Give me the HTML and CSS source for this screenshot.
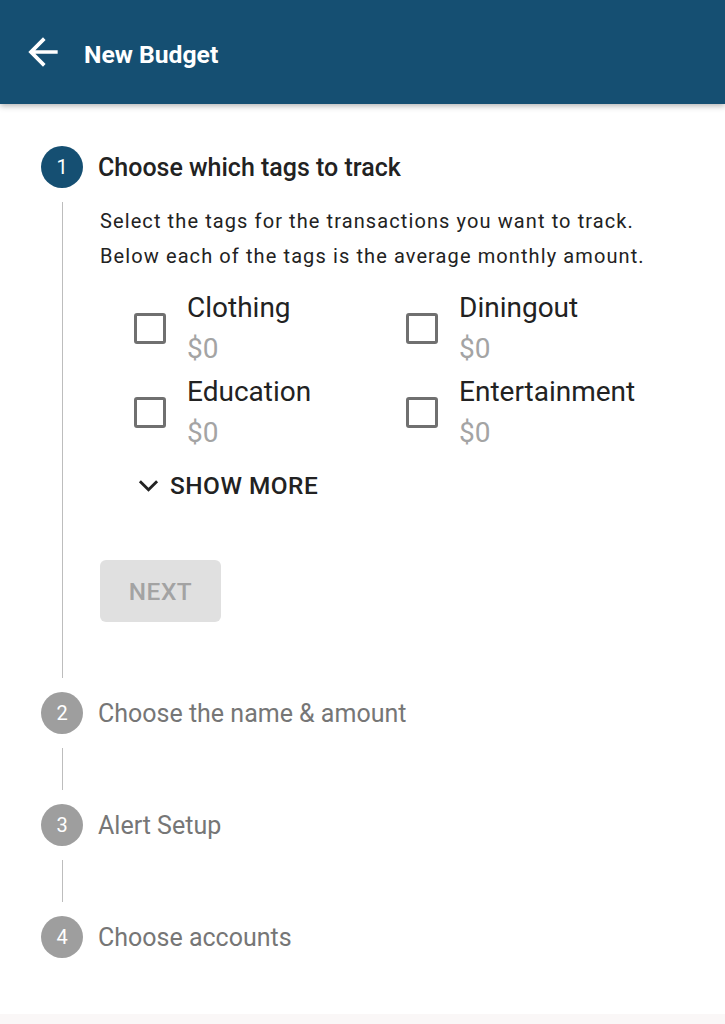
FILE: index.html
```html
<html>
<head>
	<title>New Budget</title>
	<meta charset="UTF-8">
	<meta name="viewport" content="width=device-width, initial-scale=1.0"/>
	<link rel="stylesheet" href="styles.css">
</head>
<body>
	<div class="topbar">
		<svg class="back" viewBox="0 0 24 24"><path d="M20 11H7.83l5.59-5.59L12 4l-8 8 8 8 1.41-1.41L7.83 13H20v-2z"/></svg>
		<h1>New Budget</h1>
	</div>

	<div class="stepper">
		<div class="step-head">
			<span class="num active">1</span>
			<span class="step-title active">Choose which tags to track</span>
		</div>
		<div class="step-body">
			<p class="desc">Select the tags for the transactions you want to track.<br/>
			Below each of the tags is the average monthly amount.</p>
			<div class="tags">
				<label class="tag"><span class="box"></span><span class="tag-text"><span class="tag-name">Clothing</span><span class="tag-amt">$0</span></span></label>
				<label class="tag"><span class="box"></span><span class="tag-text"><span class="tag-name">Diningout</span><span class="tag-amt">$0</span></span></label>
				<label class="tag"><span class="box"></span><span class="tag-text"><span class="tag-name">Education</span><span class="tag-amt">$0</span></span></label>
				<label class="tag"><span class="box"></span><span class="tag-text"><span class="tag-name">Entertainment</span><span class="tag-amt">$0</span></span></label>
			</div>
			<div class="more">
				<svg class="chev" viewBox="0 0 22 13"><polyline points="2,2 11,11 20,2"/></svg>
				<span>SHOW MORE</span>
			</div>
			<button class="next" disabled>NEXT</button>
		</div>

		<div class="step-head">
			<span class="num">2</span>
			<span class="step-title">Choose the name &amp; amount</span>
		</div>
		<div class="connector"></div>
		<div class="step-head">
			<span class="num">3</span>
			<span class="step-title">Alert Setup</span>
		</div>
		<div class="connector"></div>
		<div class="step-head">
			<span class="num">4</span>
			<span class="step-title">Choose accounts</span>
		</div>
	</div>
	<div class="bottom"></div>
</body>
</html>
```

FILE: styles.css
```css
*{
	margin: 0;
	padding: 0;
	box-sizing: border-box;
}
body{
	font-family: Roboto, "Liberation Sans", sans-serif;
	background: #fff;
	min-height: 1024px;
	display: flex;
	flex-direction: column;
}
.topbar{
	height: 104px;
	background: #154f72;
	display: flex;
	align-items: center;
	padding: 4px 0 0 21px;
	box-shadow: 0 2px 6px rgba(0,0,0,0.3);
}
.back{
	width: 44px;
	height: 44px;
	fill: #fff;
	margin: -4px 19px 0 0;
}
.topbar h1{
	color: #fff;
	font-size: 24.7px;
	font-weight: 700;
}
.stepper{
	flex: 1;
	padding: 42px 0 0 41px;
}
.step-head{
	display: flex;
	align-items: center;
	gap: 15px;
	height: 42px;
}
.num{
	width: 42px;
	height: 42px;
	border-radius: 50%;
	background: #9e9e9e;
	color: #fff;
	font-size: 20px;
	display: flex;
	align-items: center;
	justify-content: center;
}
.num.active{
	background: #154f72;
}
.step-title{
	font-size: 25px;
	color: #767676;
}
.step-title.active{
	color: #222;
	font-weight: 500;
}
.step-body{
	margin: 14px 0 14px 21px;
	border-left: 1.5px solid #bdbdbd;
	padding: 0 0 56px 37px;
}
.connector{
	margin: 14px 0 14px 21px;
	height: 42px;
	border-left: 1.5px solid #bdbdbd;
}
.desc{
	padding-top: 2px;
	font-size: 20px;
	line-height: 35px;
	letter-spacing: 1.1px;
	color: #222;
}
.tags{
	display: grid;
	grid-template-columns: 272px 272px;
	margin-top: 12px;
}
.tag{
	display: flex;
	align-items: center;
	height: 84px;
	padding-left: 34px;
}
.box{
	width: 32px;
	height: 31px;
	border: 3px solid #707070;
	border-radius: 3px;
	margin-right: 21px;
}
.tag-text{
	display: flex;
	flex-direction: column;
	font-size: 28px;
	line-height: 41px;
}
.tag-name{
	color: #222;
}
.tag-amt{
	color: #a4a4a4;
}
.more{
	display: flex;
	align-items: center;
	height: 42px;
	margin-top: 10px;
	padding-left: 38px;
	font-size: 24.4px;
	font-weight: 500;
	color: #222;
	letter-spacing: 0.5px;
}
.chev{
	width: 21px;
	height: 13px;
	fill: none;
	stroke: #222;
	stroke-width: 3;
	margin-right: 11px;
}
.next{
	margin-top: 54px;
	width: 121px;
	height: 62px;
	border: none;
	border-radius: 6px;
	background: #e0e0e0;
	color: #a3a3a3;
	font-family: Roboto, "Liberation Sans", sans-serif;
	font-size: 24.4px;
	font-weight: 500;
	letter-spacing: 0.5px;
}
.bottom{
	height: 10px;
	background: #faf7f7;
}
```
